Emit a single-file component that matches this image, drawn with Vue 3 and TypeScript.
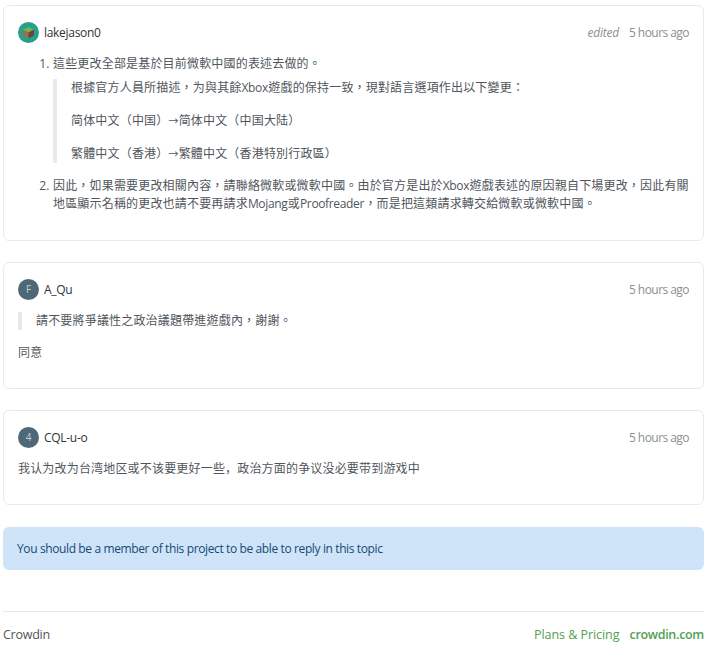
<script setup lang="ts">
interface Comment {
  id: number
  author: string
  initial?: string
  edited?: boolean
}

const comments: Comment[] = [
  { id: 1, author: 'lakejason0', edited: true },
  { id: 2, author: 'A_Qu', initial: 'F' },
  { id: 3, author: 'CQL-u-o', initial: '4' }
]
</script>

<template>
  <div class="page" lang="zh-Hant">
    <div v-for="c in comments" :key="c.id" class="card" :class="'card-' + c.id">
      <div class="head" lang="en">
        <div class="user">
          <span v-if="c.initial" class="avatar">{{ c.initial }}</span>
          <span v-else class="avatar avatar-img">
            <svg width="21" height="21" viewBox="0 0 21 21">
              <circle cx="10.5" cy="10.5" r="10.5" fill="#26a08c" />
              <path d="M10.5 5 L16 7.8 L10.5 10.6 L5 7.8 Z" fill="#7fb04f" />
              <path d="M5 7.8 L10.5 10.6 L10.5 16.2 L5 13.4 Z" fill="#9a7048" />
              <path d="M16 7.8 L10.5 10.6 L10.5 16.2 L16 13.4 Z" fill="#6b4630" />
            </svg>
          </span>
          <span class="name">{{ c.author }}</span>
        </div>
        <div class="meta">
          <em v-if="c.edited" class="edited">edited</em>
          <span>5 hours ago</span>
        </div>
      </div>

      <div v-if="c.id === 1" class="body">
        <ol>
          <li>
            這些更改全部是基於目前微軟中國的表述去做的。
            <blockquote>
              <p>根據官方人員所描述，为與其餘<span class="latin">Xbox</span>遊戲的保持一致，現對語言選項作出以下變更：</p>
              <p>简体中文（中国）<span class="arrow">→</span>简体中文（中国大陆）</p>
              <p>繁體中文（香港）<span class="arrow">→</span>繁體中文（香港特別行政區）</p>
            </blockquote>
          </li>
          <li>因此，如果需要更改相關內容，請聯絡微軟或微軟中國。由於官方是出於<span class="latin">Xbox</span>遊戲表述的原因親自下場更改，因此有關<br />地區顯示名稱的更改也請不要再請求<span class="latin">Mojang</span>或<span class="latin">Proofreader</span>，而是把這類請求轉交給微軟或微軟中國。</li>
        </ol>
      </div>

      <div v-else-if="c.id === 2" class="body">
        <blockquote class="short">
          <p>請不要將爭議性之政治議題帶進遊戲內，謝謝。</p>
        </blockquote>
        <p class="plain">同意</p>
      </div>

      <div v-else class="body">
        <p class="plain" lang="zh-Hans">我认为改为台湾地区或不该要更好一些，政治方面的争议没必要带到游戏中</p>
      </div>
    </div>

    <div class="alert" lang="en">You should be a member of this project to be able to reply in this topic</div>

    <div class="footer" lang="en">
      <span>Crowdin</span>
      <div class="links">
        <a>Plans &amp; Pricing</a>
        <a class="strong">crowdin.com</a>
      </div>
    </div>
  </div>
</template>

<style>
body {
  background: #fff;
}
</style>

<style scoped>
.page {
  width: 701px;
  padding: 5px 0 0 3px;
  font-family: 'Open Sans', 'Noto Sans CJK TC', sans-serif;
  font-size: 12px;
  line-height: 18px;
  color: #50565c;
  text-spacing-trim: space-all;
}

.card {
  border: 1px solid #e8e9ea;
  border-radius: 6px;
  padding: 16px 14px 0;
  margin-bottom: 21px;
  box-sizing: border-box;
}

.card-1 {
  height: 236px;
}

.card-2 {
  height: 127px;
}

.card-3 {
  height: 95px;
  margin-bottom: 22px;
}

.head {
  display: flex;
  justify-content: space-between;
  align-items: center;
  height: 21px;
}

.user {
  display: flex;
  align-items: center;
  gap: 5px;
}

.avatar {
  width: 21px;
  height: 21px;
  border-radius: 50%;
  background: #4f6878;
  color: #c3ced6;
  font-size: 10px;
  line-height: 21px;
  text-align: center;
}

.avatar-img {
  background: none;
}

.avatar-img svg {
  display: block;
}

.name {
  font-size: 12px;
  font-weight: 500;
  letter-spacing: -0.3px;
  color: #2f3438;
}

.meta {
  display: flex;
  gap: 10px;
  font-size: 12px;
  letter-spacing: -0.55px;
  color: #8a8f94;
}

.edited {
  font-style: italic;
  letter-spacing: -0.2px;
}

.body {
  margin-top: 12px;
  letter-spacing: 0.18px;
}

.latin {
  letter-spacing: -0.35px;
  margin-right: 0.4px;
}

.arrow {
  font-size: 10px;
}

ol {
  margin: 0;
  padding-left: 35px;
}

li + li {
  margin-top: 14px;
}

blockquote {
  margin: 6px 0 0;
  padding: 0 0 0 14px;
  border-left: 4px solid #e8e9ea;
}

blockquote p {
  margin: 0 0 15px;
}

blockquote p:last-child {
  margin-bottom: 0;
}

.short {
  margin: 0 0 14px;
}

.plain {
  margin: 0;
}

.alert {
  height: 43px;
  box-sizing: border-box;
  padding: 0 14px;
  border-radius: 6px;
  background: #cfe4f8;
  color: #164a76;
  font-size: 12px;
  font-weight: 500;
  letter-spacing: -0.38px;
  line-height: 44px;
}

.footer {
  margin-top: 41px;
  padding-top: 14px;
  border-top: 1px solid #e8e9ea;
  display: flex;
  justify-content: space-between;
  font-size: 12.5px;
  letter-spacing: -0.25px;
}

.links {
  display: flex;
  gap: 10px;
  color: #4fa052;
  letter-spacing: -0.05px;
}

.strong {
  font-weight: 600;
  letter-spacing: -0.3px;
}
</style>
